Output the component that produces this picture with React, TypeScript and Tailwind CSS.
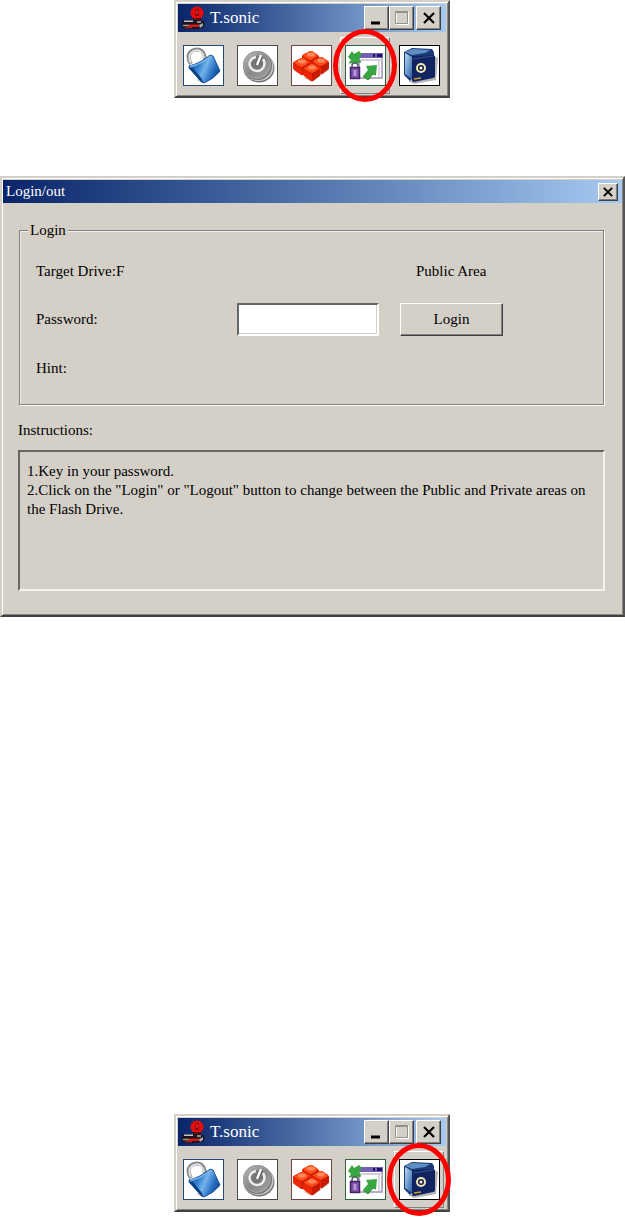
import React from "react";

const raised =
  "border border-t-white border-l-white border-r-[#404040] border-b-[#404040] shadow-[inset_-1px_-1px_0_#808080]";

function AppIcon() {
  return (
    <svg viewBox="0 0 24 24" className="size-6 shrink-0" aria-hidden="true">
      <ellipse cx="15" cy="7" rx="6.500" ry="6.500" fill="#e80b0b" />
      <path d="M15 3v7" stroke="#7c0808" strokeWidth="3" />
      <path d="M15 4v4" stroke="#ff4a4a" strokeWidth="1" />
      <path d="M11 12h8v3h-8z" fill="#5a0c12" />
      <path d="M0 15l5-1h10l6 1 2 3-2 4-6 1H2l-2-3z" fill="#1c1418" />
      <path d="M2 14.500h9v1.500H2z" fill="#c3c3c9" />
      <path d="M15 15h4v2h-4z" fill="#8d8d95" />
      <path d="M1 19.500h6" stroke="#a49a9a" strokeWidth="1.500" />
      <path d="M7 18.500h10v2.500H7z" fill="#d81616" />
      <path d="M17 19l4-2v3l-3 2z" fill="#a5a5ad" />
      <path d="M3 21.500h7" stroke="#a52626" strokeWidth="1.500" />
    </svg>
  );
}

function LockIcon() {
  return (
    <svg viewBox="0 0 39 39" className="size-full" aria-hidden="true">
      <defs>
        <linearGradient id="lockBody" x1="0" y1="0.3" x2="1" y2="0.7">
          <stop offset="0" stopColor="#1658a6" />
          <stop offset="0.3" stopColor="#2f7fcf" />
          <stop offset="0.5" stopColor="#74b4ec" />
          <stop offset="0.75" stopColor="#2a72c4" />
          <stop offset="1" stopColor="#0b3f86" />
        </linearGradient>
      </defs>
      <path d="M12 34l8 3 16-10-2-2z" fill="#aeb4bc" opacity="0.7" />
      <path d="M7 18C3 12 4 6 10 4s10 1 11 9" fill="none" stroke="#85888c" strokeWidth="4" />
      <path d="M7 17C4 12 5 7 10 5s9 1 10 7" fill="none" stroke="#dfe1e3" strokeWidth="2" />
      <path d="M5 20Q17 17 26 9l3 1 7 15q-6 8-16 12l-2-1L5 22z" fill="url(#lockBody)" stroke="#1c559b" strokeWidth="1" />
      <path d="M6 20.500Q18 18 27 10" fill="none" stroke="#7db6e9" strokeWidth="1.500" />
      <path d="M5 22l12 14 2 1-1-4-9-11z" fill="#0b4184" />
    </svg>
  );
}

function PowerIcon() {
  return (
    <svg viewBox="0 0 39 39" className="size-full" aria-hidden="true">
      <defs>
        <linearGradient id="knob" x1="0" y1="0" x2="1" y2="1">
          <stop offset="0" stopColor="#bdbdbd" />
          <stop offset="0.5" stopColor="#868686" />
          <stop offset="1" stopColor="#a5a5a5" />
        </linearGradient>
      </defs>
      <ellipse cx="21" cy="22" rx="15.500" ry="14.500" fill="#777" />
      <ellipse cx="20.500" cy="21" rx="15" ry="14" fill="#c5c5c5" />
      <circle cx="19.500" cy="19.500" r="14.500" fill="#707070" />
      <circle cx="19" cy="19" r="13.500" fill="url(#knob)" stroke="#a5a5a5" strokeWidth="1" />
      <circle cx="19" cy="18" r="8" fill="#777" />
      <path d="M18 11c-6 1-8 7-5 11s9 4 12 0c2-3 2-6 0-9" fill="none" stroke="#ededed" strokeWidth="2.500" />
      <path d="M23 10l-4 9" stroke="#555" strokeWidth="4" />
      <path d="M23 9l-4 10" stroke="#fafafa" strokeWidth="2.500" />
    </svg>
  );
}

function Block({ x, y }: { x: number; y: number }) {
  return (
    <g transform={`translate(${x} ${y})`}>
      <path d="M0 5q0-1 2-2l6-3h2l6 4q1 1 1 2v5q0 1-2 2l-5 4H8l-7-5q-1-1-1-2z" fill="#ee2606" />
      <path d="M9 9l8-4v6q0 1-2 2l-5 4H9z" fill="#c91c04" />
      <path d="M1 4l7-4h2l6 4q-3 4-7 5Q3 8 1 4z" fill="#ff4d1c" />
      <ellipse cx="9" cy="3.500" rx="4" ry="2" fill="#ff8a5c" />
      <path d="M0 5l9 5 8-4" fill="none" stroke="#a81503" strokeWidth="0.500" />
    </g>
  );
}

function BlocksIcon() {
  return (
    <svg viewBox="0 0 39 39" className="size-full" aria-hidden="true">
      <path d="M12 32l8 4 17-12-2-3z" fill="#cbbcb9" />
      <Block x={10} y={5} />
      <Block x={1} y={12} />
      <Block x={20} y={11} />
      <Block x={11} y={18} />
    </svg>
  );
}

function LoginIcon() {
  return (
    <svg viewBox="0 0 39 39" className="size-full" aria-hidden="true">
      <path d="M13 8h23v24H13z" fill="#fff" stroke="#9a92ad" strokeWidth="1.500" />
      <path d="M12 7h25v5H12z" fill="#7260b0" />
      <path d="M27 8h2v3h-2zM31 8h5v3h-5z" fill="#20116e" />
      <path d="M14 14h22" stroke="#d3cde4" strokeWidth="2" />
      <path d="M33 15v16" stroke="#ddd9e7" strokeWidth="2" />
      <path d="M6 24v-4q0-3 3-3t3 3v4" fill="none" stroke="#66577a" strokeWidth="1.500" />
      <path d="M4.500 21.500h9v11h-9z" fill="#7f52ad" stroke="#3e2460" strokeWidth="1.500" />
      <path d="M9 24v6" stroke="#b795d6" strokeWidth="3" />
      <path d="M2 11l4-6 2 3 5-3 3 3-3 4 2 4-12 1 2-3z" fill="#38a641" />
      <path d="M20 20l11-1-1 10-3-1-5 6-5-4 5-6z" fill="#38a641" />
      <path d="M3 17l12-1M17 30l5 4 5-6 3 1" fill="none" stroke="#2b8a35" strokeWidth="1" />
    </svg>
  );
}

function SafeIcon() {
  return (
    <svg viewBox="0 0 39 39" className="size-full" aria-hidden="true">
      <defs>
        <linearGradient id="safeSide" x1="0" y1="0" x2="1" y2="1">
          <stop offset="0" stopColor="#b9dcf3" />
          <stop offset="1" stopColor="#2a5ea8" />
        </linearGradient>
      </defs>
      <path d="M8 35l6 3 22-4 2-22-4-2v20z" fill="#b4b4b4" />
      <path d="M4 6l8-4 20 1 2 3v6L12 33l-2 2-6-6z" fill="#1b3a78" />
      <path d="M5 7l7 4v22l-7-5z" fill="url(#safeSide)" />
      <path d="M5 6l7-3 18 1-5 3-13 2z" fill="#5f8fc4" />
      <path d="M12 11q0-1 2-1l19-1q2 0 2 2v19q0 2-2 2l-19 4q-2 0-2-2z" fill="#12245f" />
      <path d="M13 13l20-3" stroke="#34508f" strokeWidth="1" />
      <circle cx="21" cy="22" r="5" fill="#efe9b5" />
      <circle cx="21" cy="22" r="3" fill="#10193d" />
      <circle cx="21" cy="22" r="1.500" fill="#fff" />
      <path d="M14 33l7-1" stroke="#c69d32" strokeWidth="1.500" />
    </svg>
  );
}

const tools = [
  { name: "Lock", icon: LockIcon, frame: "border-[#264a78]" },
  { name: "Power", icon: PowerIcon, frame: "border-[#4a4a4a]" },
  { name: "Partition", icon: BlocksIcon, frame: "border-[#6e4545]" },
  { name: "Login/out", icon: LoginIcon, frame: "border-[#2e6440]" },
  { name: "Safe", icon: SafeIcon, frame: "border-black" },
];

function CrossIcon({ className }: { className: string }) {
  return (
    <svg viewBox="0 0 12 12" className={className} aria-hidden="true">
      <path d="M1 1l10 10M11 1L1 11" stroke="#000" strokeWidth="2.200" fill="none" />
    </svg>
  );
}

function ToolbarWindow({ selected }: { selected: string }) {
  const control = `flex h-6 w-[25px] items-center justify-center bg-[#d4d0c8] ${raised}`;
  return (
    <section
      aria-label="T.sonic"
      className="w-[276px] border-2 border-t-[#d4d0c8] border-l-[#d4d0c8] border-r-[#555] border-b-[#404040] bg-[#d4d0c8] shadow-[inset_1px_1px_0_#fff,inset_-1px_-1px_0_#8a8782]"
    >
      <header className="mx-0.5 mt-0.5 flex h-7 items-center bg-linear-to-r from-[#0a246a] to-[#a6caf0] pr-[5px] pl-1">
        <AppIcon />
        <h2 className="ml-1 flex-1 text-[17px] leading-6 text-white">T.sonic</h2>
        <button type="button" aria-label="Minimize" className={control}>
          <svg viewBox="0 0 14 14" className="size-3.5" aria-hidden="true">
            <path d="M1 12h9" stroke="#000" strokeWidth="3" />
          </svg>
        </button>
        <button type="button" aria-label="Maximize" className={control}>
          <svg viewBox="0 0 16 16" className="size-4" aria-hidden="true">
            <path d="M2.500 2.500h12v12h-12z" fill="none" stroke="#fff" />
            <path d="M1.500 1.500h12v12h-12z" fill="none" stroke="#929089" />
            <path d="M1 2.500h13" stroke="#929089" />
          </svg>
        </button>
        <button type="button" aria-label="Close" className={`${control} ml-0.5`}>
          <CrossIcon className="size-3" />
        </button>
      </header>
      <div className="flex gap-1 px-0.5 pt-[5px] pb-0.5">
        {tools.map(({ name, icon: Icon, frame }) => {
          const active = name === selected;
          return (
            <button
              key={name}
              type="button"
              aria-label={name}
              className={`relative flex h-[57px] w-[50px] shrink-0 items-center justify-center border ${
                active
                  ? "border-t-white border-l-white border-r-[#808080] border-b-[#808080]"
                  : "border-transparent"
              }`}
            >
              <span className={`block size-[41px] border bg-white ${frame}`}>
                <Icon />
              </span>
              {active && (
                <span className="pointer-events-none absolute -inset-x-2 -inset-y-[9px] rounded-[50%] border-5 border-[#fe0000]" />
              )}
            </button>
          );
        })}
      </div>
    </section>
  );
}

function LoginDialog() {
  return (
    <section
      aria-label="Login/out"
      className="w-full border-2 border-t-[#d4d0c8] border-l-[#d4d0c8] border-r-[#555] border-b-[#404040] bg-[#d4d0c8] text-[15px] leading-[19px] text-black shadow-[inset_1px_1px_0_#fff,inset_-1px_-1px_0_#8a8782]"
    >
      <header className="mx-px mt-0.5 flex h-[23px] items-center bg-linear-to-r from-[#0a246a] to-[#a6caf0] pr-1 pl-[3px]">
        <h1 className="flex-1 text-white">Login/out</h1>
        <button
          type="button"
          aria-label="Close"
          className={`flex h-[18px] w-5 items-center justify-center bg-[#d4d0c8] ${raised}`}
        >
          <CrossIcon className="size-2.5" />
        </button>
      </header>
      <form className="pr-[18px] pb-6 pl-4 pt-[18px]" onSubmit={(e) => e.preventDefault()}>
        <fieldset className="mx-px border border-[#808080] px-4 pb-[26px] shadow-[1px_1px_0_#fff,inset_1px_1px_0_#eee]">
          <legend className="-ml-2 bg-[#d4d0c8] px-0.5">Login</legend>
          <div className="grid grid-cols-[201px_163px_1fr] items-center">
            <p className="col-span-2 pt-[22px]">Target Drive:F</p>
            <p className="pl-4 pt-[22px]">Public Area</p>
            <label htmlFor="password" className="mt-[22px]">
              Password:
            </label>
            <input
              id="password"
              type="password"
              className="mt-[22px] h-[33px] w-[142px] border-2 border-t-[#666] border-l-[#666] border-r-white border-b-white bg-white px-1 shadow-[inset_-1px_-1px_0_#d4d0c8] outline-none"
            />
            <button
              type="submit"
              className={`mt-[22px] h-[33px] w-[103px] bg-[#d4d0c8] ${raised}`}
            >
              Login
            </button>
            <p className="mt-[23px]">Hint:</p>
          </div>
        </fieldset>
        <h2 className="mt-4">Instructions:</h2>
        <div className="mt-[10px] h-[141px] border-2 border-t-[#666] border-l-[#666] border-r-[#f4f3f1] border-b-[#f4f3f1] px-[7px] pt-[10px]">
          <p>1.Key in your password.</p>
          <p>
            2.Click on the "Login" or "Logout" button to change between the Public and Private areas
            on the Flash Drive.
          </p>
        </div>
      </form>
    </section>
  );
}

export default function App() {
  return (
    <main className="flex flex-col bg-white font-['Liberation_Serif',serif]">
      <div className="flex justify-center pr-px">
        <ToolbarWindow selected="Login/out" />
      </div>
      <div className="mt-[78px]">
        <LoginDialog />
      </div>
      <div className="mt-[497px] flex justify-center pr-px pb-[7px]">
        <ToolbarWindow selected="Safe" />
      </div>
    </main>
  );
}
